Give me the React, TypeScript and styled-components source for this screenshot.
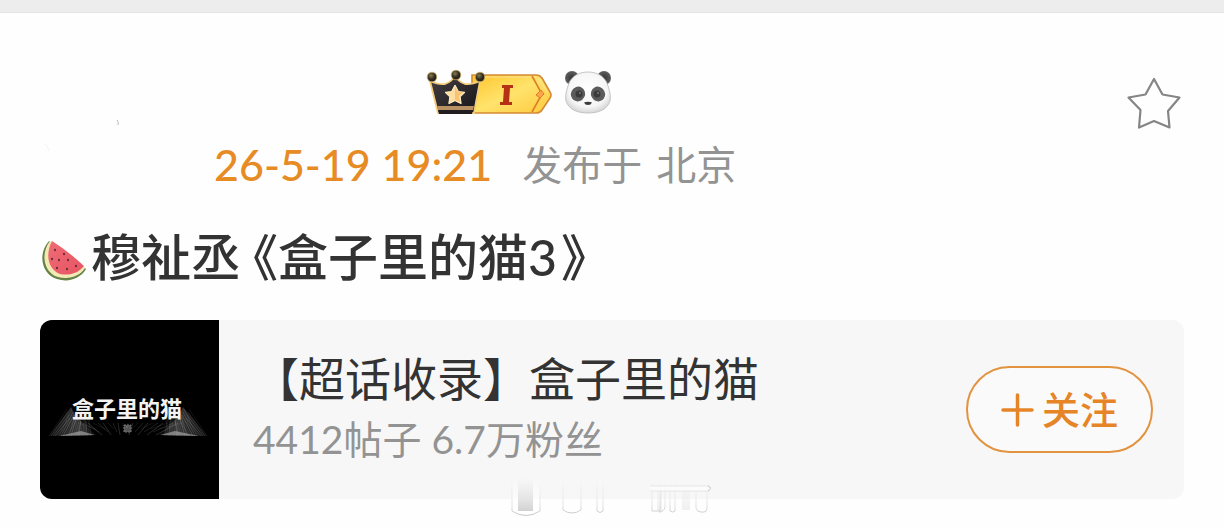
import React from "react";
import styled, { createGlobalStyle } from "styled-components";

const GlobalStyle = createGlobalStyle`
  * { box-sizing: border-box; }
  body {
    margin: 0;
    background: #fefefe;
    color: #333;
    font-family: Lato, "Noto Sans CJK SC", sans-serif;
  }
  h1, h2, p { margin: 0; font-weight: 400; }
  svg { display: block; flex: none; }
`;

const TopBar = styled.div`
  height: 13px;
  background: #ededed;
  border-bottom: 1px solid #e4e4e4;
`;

const Post = styled.article`
  padding: 52px 40px 24px;
`;

const Header = styled.header`
  display: flex;
  align-items: flex-start;
`;

const Avatar = styled.div`
  flex: none;
  width: 174px;
  padding-top: 52px;
`;

const Author = styled.div`
  flex: 1;
  min-width: 0;
`;

const Badges = styled.div`
  display: flex;
  align-items: center;
  gap: 11px;
  height: 54px;
  padding-left: 212px;
`;

const Meta = styled.p`
  display: flex;
  align-items: center;
  gap: 30px;
  height: 60px;
  margin-top: 16px;
  line-height: 60px;
  white-space: nowrap;
`;

const PostTime = styled.time`
  color: #e78b24;
  font-size: 43px;
  font-weight: 500;
`;

const Place = styled.span`
  display: flex;
  gap: 14px;
  color: #939393;
  font-size: 40px;
`;

const StarButton = styled.button`
  flex: none;
  margin: 10px 0 0;
  padding: 0;
  border: 0;
  background: none;
`;

const Title = styled.h1`
  display: flex;
  align-items: flex-start;
  height: 72px;
  margin-top: 26px;
  font-size: 50px;
  font-weight: 500;
  line-height: 72px;
  white-space: nowrap;

  svg { margin-top: 16px; }
`;

const TitleText = styled.span`
  margin-left: 4px;
`;

const Bracket = styled.span`
  font-feature-settings: "halt";
  margin: 0 0 0 12px;
`;

const ClosingBracket = styled(Bracket)`
  margin: 0 0 0 4px;
`;

const Card = styled.section`
  display: flex;
  align-items: center;
  height: 179px;
  margin-top: 27px;
  padding-right: 31px;
  border-radius: 12px;
  overflow: hidden;
  background: #f7f7f7;
`;

const Info = styled.div`
  flex: 1;
  min-width: 0;
  padding: 0 0 8px 34px;
  white-space: nowrap;
`;

const Topic = styled.h2`
  font-size: 46px;
  line-height: 66px;
`;

const Stats = styled.p`
  color: #939393;
  font-size: 39px;
  line-height: 54px;
`;

const FollowButton = styled.button`
  display: flex;
  align-items: center;
  justify-content: center;
  gap: 8px;
  width: 187px;
  height: 87px;
  padding: 0;
  border: 2px solid #e2933f;
  border-radius: 44px;
  background: #fafafa;
  color: #e58528;
  font: 500 38px/54px "Noto Sans CJK SC", sans-serif;
`;

const FollowLabel = styled.span`
  padding-bottom: 4px;
`;

const Watermark = styled.div`
  position: absolute;
  top: 474px;
  left: 508px;
`;

const CrownBadge = () => (
  <svg width="127" height="50" viewBox="0 0 127 50" role="img" aria-label="I">
    <defs>
      <linearGradient id="gold" x1="0" y1="0" x2="1" y2="1">
        <stop offset="0" stopColor="#ffc52c" />
        <stop offset=".5" stopColor="#ffe36c" />
        <stop offset="1" stopColor="#ffc83c" />
      </linearGradient>
      <linearGradient id="black" x1="0" y1="0" x2="1" y2="1">
        <stop offset="0" stopColor="#454044" />
        <stop offset="1" stopColor="#171519" />
      </linearGradient>
      <radialGradient id="ball" cx=".4" cy=".35" r=".65">
        <stop offset="0" stopColor="#8a7b48" />
        <stop offset=".6" stopColor="#302c24" />
        <stop offset="1" stopColor="#1d1a18" />
      </radialGradient>
    </defs>
    <path d="M46 8h64q4 0 6 3l8 14q2 3 0 6l-8 12q-2 3-6 3H46z" fill="url(#gold)" stroke="#d38a35" strokeWidth="1.600" />
    <path d="M50 10h59q3 0 5 3l8 13" fill="none" stroke="#ffe28b" strokeWidth="1" />
    <path d="M106 9l10 18-10 18" fill="none" stroke="#dc7d2a" strokeWidth="1.600" />
    <path d="M115 23l3 4-4 4-4-3z" fill="#f9a54a" stroke="#e07a2d" />
    <path d="M76 18h11v3h-3l-1 14h3v3H74v-3h3l1-14h-2z" fill="#b53217" />
    <path d="M4 14q9 4 15 3 7-2 10-9 3 7 10 9 6 1 15-3l-6 32H12z" fill="url(#black)" stroke="#f3cd7b" strokeWidth="1.800" />
    <path d="M11 39h37l-1 4H12z" fill="#b99162" />
    <path d="M12 43h35l-1 4H13z" fill="#211d20" />
    <circle cx="6" cy="10" r="4.800" fill="url(#ball)" stroke="#d4b569" strokeWidth=".7" />
    <circle cx="30" cy="8" r="4.800" fill="url(#ball)" stroke="#d4b569" strokeWidth=".7" />
    <circle cx="54" cy="10" r="4.800" fill="url(#ball)" stroke="#d4b569" strokeWidth=".7" />
    <path d="M29 18l3.500 6.600 6.500.7-4.800 4.700 1 6.700-6.200-3-6.200 3 1-6.700-4.800-4.700 6.500-.7z" fill="#ffdf9f" stroke="#fff0ca" strokeWidth="1" strokeLinejoin="round" />
    <path d="M29 20v13l5 2-1-6 4-4-5-.5z" fill="#f5ac51" opacity=".55" />
  </svg>
);

const Panda = () => (
  <svg width="48" height="46" viewBox="0 0 48 46" role="img" aria-label="🐼">
    <defs>
      <radialGradient id="face" cx=".5" cy=".4" r=".6">
        <stop offset="0" stopColor="#fff" />
        <stop offset=".75" stopColor="#f5f5f5" />
        <stop offset="1" stopColor="#d8d8d8" />
      </radialGradient>
      <radialGradient id="ear">
        <stop offset="0" stopColor="#333" />
        <stop offset="1" stopColor="#606060" />
      </radialGradient>
    </defs>
    <circle cx="8" cy="9" r="7" fill="url(#ear)" />
    <circle cx="40" cy="9" r="7" fill="url(#ear)" />
    <path d="M24 3C35 3 42 9 44 17c2 6 3 11 2 15-3 9-12 12-22 12S5 41 2 32c-1-4 0-9 2-15C6 9 13 3 24 3z" fill="url(#face)" stroke="#b9b9b9" strokeWidth=".8" />
    <ellipse cx="14" cy="25" rx="7" ry="7.500" transform="rotate(28 14 25)" fill="#5b5b5b" />
    <ellipse cx="34" cy="25" rx="7" ry="7.500" transform="rotate(-28 34 25)" fill="#5b5b5b" />
    <circle cx="15" cy="25" r="3.500" fill="#3a3a3a" />
    <circle cx="33" cy="25" r="3.500" fill="#3a3a3a" />
    <circle cx="16" cy="24" r=".8" fill="#aaa" />
    <circle cx="34" cy="24" r=".8" fill="#aaa" />
    <path d="M20 33.500q4-1.500 8 0-1 2.500-4 2.500t-4-2.500z" fill="#3c3c3c" />
  </svg>
);

const Star = () => (
  <svg width="60" height="56" viewBox="0 0 60 56" fill="none" stroke="#858585" strokeWidth="2.200" strokeLinejoin="round">
    <path d="M30 4L38.500 19.500 55.500 22.500 44 36 45.500 52.500 30 46 15 52.500 16.500 35 4.500 22.500 21.500 19.500z" />
  </svg>
);

const Watermelon = () => (
  <svg width="47" height="46" viewBox="0 0 47 46" role="img" aria-label="🍉">
    <defs>
      <linearGradient id="flesh" x1="0" y1="0" x2="1" y2="1">
        <stop offset="0" stopColor="#ef6b74" />
        <stop offset="1" stopColor="#e75565" />
      </linearGradient>
    </defs>
    <path d="M9 4C-3 17 2 38 17 42c12 4 24-1 29-10z" fill="#668448" />
    <path d="M10 4C0 17 4 36 18 40c11 3 22-1 27-9z" fill="#f3e9b5" />
    <path d="M12 4C5 17 8 33 20 37c10 2 18-1 24-8Q28 14 12 4z" fill="url(#flesh)" />
    <g fill="#54262b">
      <ellipse cx="15" cy="13" rx=".9" ry="1.200" />
      <ellipse cx="12" cy="22" rx=".9" ry="1.200" />
      <ellipse cx="19" cy="23" rx=".9" ry="1.200" />
      <ellipse cx="24" cy="17" rx=".9" ry="1.200" />
      <ellipse cx="28" cy="23" rx=".9" ry="1.200" />
      <ellipse cx="17" cy="31" rx=".9" ry="1.200" />
      <ellipse cx="27" cy="32" rx=".9" ry="1.200" />
      <ellipse cx="36" cy="29" rx=".9" ry="1.200" />
    </g>
  </svg>
);

const rays = Array.from({ length: 22 }, (_, i) => i);

const Cover = () => (
  <svg width="179" height="179" viewBox="0 0 179 179" role="img" aria-label="盒子里的猫">
    <defs>
      <linearGradient id="fadeLeft">
        <stop offset="0" stopColor="#888" stopOpacity=".25" />
        <stop offset=".6" stopColor="#aaa" stopOpacity=".8" />
        <stop offset="1" stopColor="#999" stopOpacity=".1" />
      </linearGradient>
      <linearGradient id="fadeRight" x1="1" x2="0">
        <stop offset="0" stopColor="#888" stopOpacity=".25" />
        <stop offset=".6" stopColor="#aaa" stopOpacity=".8" />
        <stop offset="1" stopColor="#999" stopOpacity=".1" />
      </linearGradient>
    </defs>
    <rect width="179" height="179" fill="#000" />
    <path d="M9 116L31 87 36 97 56 115z" fill="url(#fadeLeft)" opacity=".4" />
    <path d="M167 116L143 87 138 97 119 115z" fill="url(#fadeRight)" opacity=".4" />
    <g stroke="#aaa" strokeWidth=".6">
      {rays.map((i) => (
        <path key={i} d={`M${9 + i * 2} 116L${27 + i} ${89 + (i % 5) * 3}M${167 - i * 2} 116L${149 - i} ${89 + (i % 5) * 3}`} opacity={0.2 + (i % 4) * 0.1} />
      ))}
      {rays.map((i) => (
        <path key={i} d={`M${38 + i * 5} 103L${56 + i * 3} ${109 + (i % 3) * 3}`} opacity={0.2 + (i % 3) * 0.1} />
      ))}
    </g>
    <path d="M19 116l22-5 14 4zM159 116l-24-5-15 4z" fill="#aaa" opacity=".65" />
    <path d="M84 105h7v7h-7zM86 107h3" fill="#555" stroke="#777" strokeWidth="1" strokeDasharray="2 1" />
    <text x="87" y="97" textAnchor="middle" fill="#f3f3f3" fontFamily="'Noto Sans CJK SC', sans-serif" fontSize="22" fontWeight="700">盒子里的猫</text>
  </svg>
);

const Plus = () => (
  <svg width="33" height="34" viewBox="0 0 33 34" fill="none" stroke="#e58528" strokeWidth="3.500" strokeLinecap="round">
    <path d="M2 17h29M16.500 2v30" />
  </svg>
);

const AvatarTrace = () => (
  <svg width="90" height="36" viewBox="0 0 90 36" fill="none">
    <path d="M77 3q2 2 1 5" stroke="#aaa" strokeWidth=".8" />
    <path d="M5 27q3 2 4 7" stroke="#f3f3f3" />
  </svg>
);

const WatermarkTrace = () => (
  <svg width="210" height="44" viewBox="0 0 210 44" fill="none" aria-hidden="true">
    <defs>
      <linearGradient id="edge" x1="0" y1="0" x2="0" y2="44" gradientUnits="userSpaceOnUse">
        <stop offset=".15" stopColor="#ddd" stopOpacity="0" />
        <stop offset=".7" stopColor="#ddd" stopOpacity=".8" />
        <stop offset="1" stopColor="#bbb" />
      </linearGradient>
      <linearGradient id="halo" x1="0" y1="4" x2="0" y2="40" gradientUnits="userSpaceOnUse">
        <stop offset="0" stopColor="#fff" stopOpacity="0" />
        <stop offset="1" stopColor="#fff" />
      </linearGradient>
      <linearGradient id="fill" x1="0" y1="0" x2="0" y2="1">
        <stop offset="0" stopColor="#ddd" stopOpacity="0" />
        <stop offset="1" stopColor="#d2d2d2" />
      </linearGradient>
    </defs>
    <path d="M4 4h28v34q-14 6-28 0z" fill="url(#halo)" />
    <path d="M10 4h15v33H10z" fill="url(#fill)" />
    <g stroke="url(#edge)" strokeWidth="1">
      <path d="M4 4v33q14 9 28 0V4" />
      <path d="M55 4v32q9 6 18 0V4" />
      <path d="M89 6v31q3 3 6 0V6M144 6v31h8l1-31M157 6v27q-1 5-6 5M162 6v31q3 2 5 0V6M188 17v17q1 4 5 4h3q3 0 3-4V17" />
    </g>
    <path d="M174 7h8v29h-8zM149 7h5v30h-5z" fill="url(#fill)" opacity=".35" />
    <path d="M142 12h59q3 2 0 5h-59z" fill="#fff" opacity=".6" />
    <path d="M142 12h59M142 17h59" stroke="#e6e6e6" />
    <path d="M200 12q5 2 0 5" stroke="#c4c4c4" strokeWidth="1" />
  </svg>
);

export default function App() {
  return (
    <>
      <GlobalStyle />
      <TopBar />
      <Post>
        <Header>
          <Avatar><AvatarTrace /></Avatar>
          <Author>
            <Badges>
              <CrownBadge />
              <Panda />
            </Badges>
            <Meta>
              <PostTime>26-5-19 19:21</PostTime>
              <Place><span>发布于</span><span>北京</span></Place>
            </Meta>
          </Author>
          <StarButton aria-label="收藏"><Star /></StarButton>
        </Header>
        <Title>
          <Watermelon />
          <TitleText>
            穆祉丞<Bracket>《</Bracket>盒子里的猫3<ClosingBracket>》</ClosingBracket>
          </TitleText>
        </Title>
        <Card>
          <Cover />
          <Info>
            <Topic>【超话收录】盒子里的猫</Topic>
            <Stats>4412帖子 6.7万粉丝</Stats>
          </Info>
          <FollowButton><Plus /><FollowLabel>关注</FollowLabel></FollowButton>
        </Card>
      </Post>
      <Watermark><WatermarkTrace /></Watermark>
    </>
  );
}
